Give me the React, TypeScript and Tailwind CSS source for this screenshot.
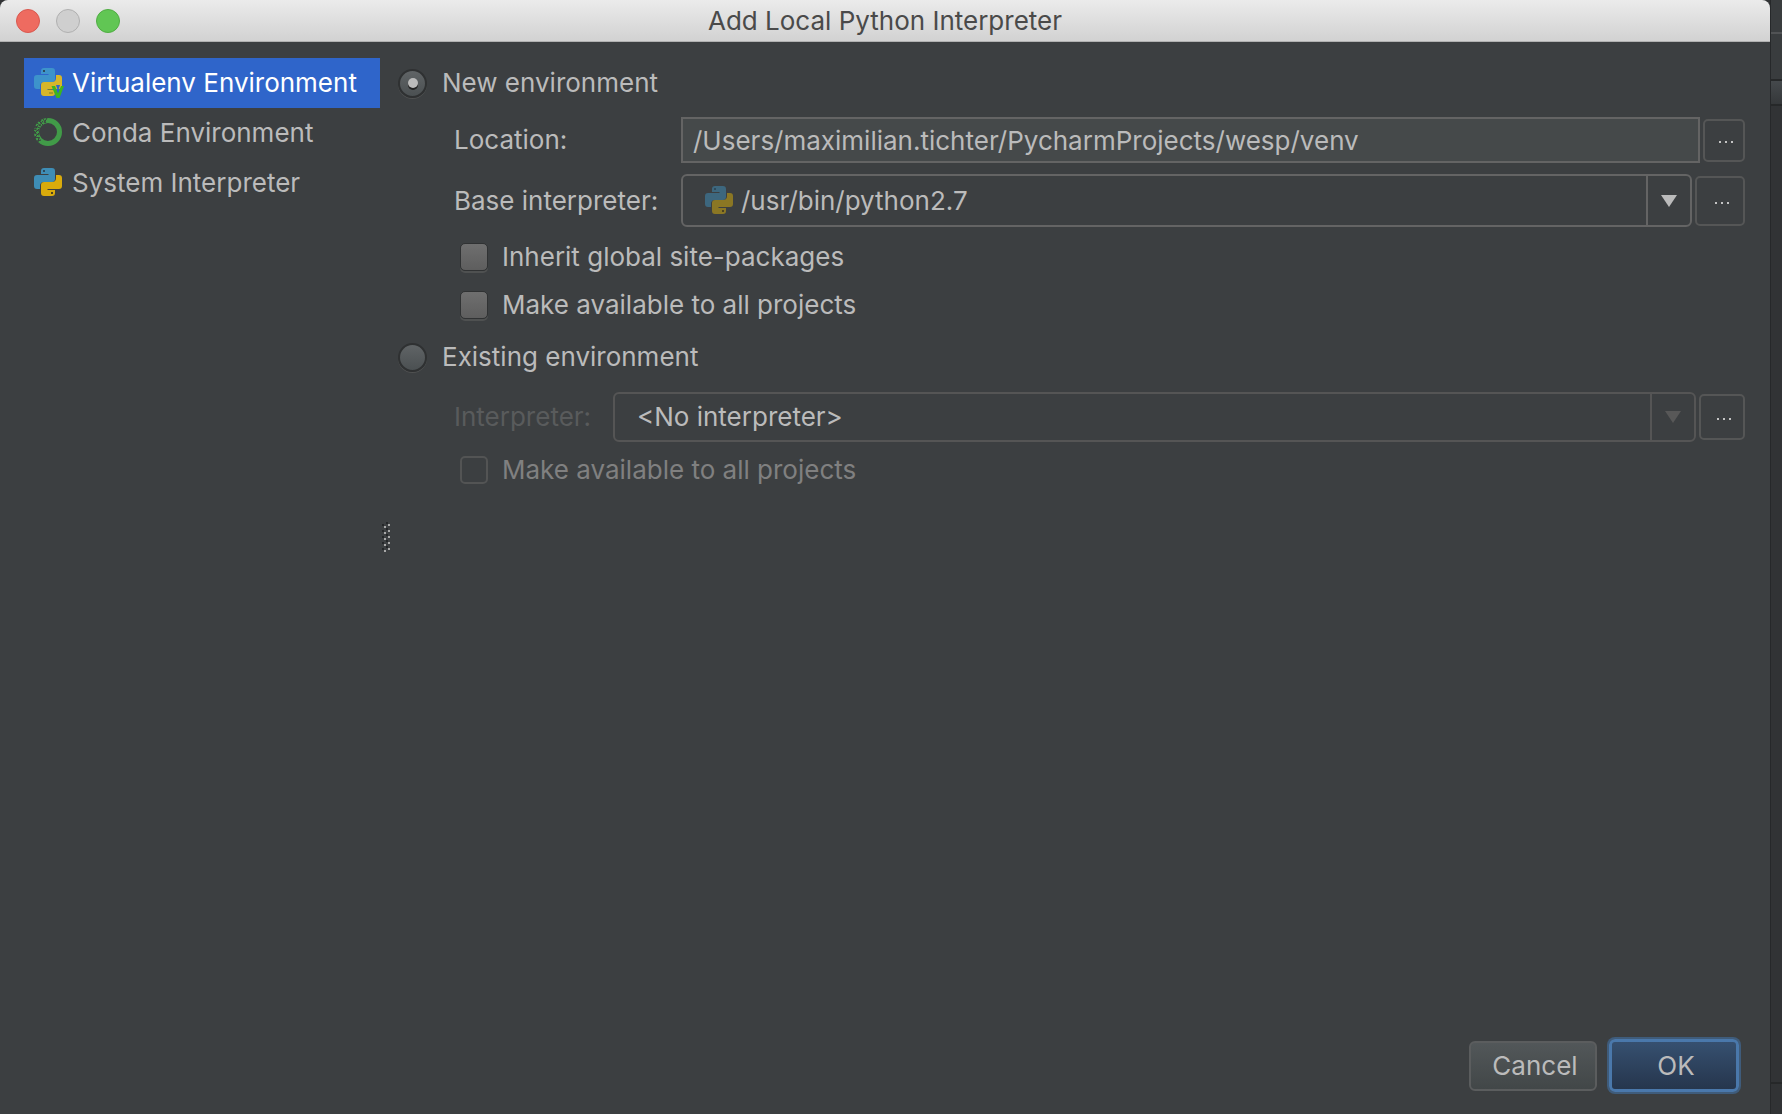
import { useId, useState } from "react";
import type { ReactNode } from "react";

const bluePath =
  "M10 0h8q3 0 3 3v8q0 3-3 3h-8q-4 0-4 4v3H3q-3 0-3-3v-8q0-3 3-3h11.5v-1H7V3q0-3 3-3Z";

function PythonIcon({ tone = "normal" }: { tone?: "normal" | "selected" | "dimmed" }) {
  const colors = {
    normal: ["#3e8db5", "#d9ab0c"],
    selected: ["#3d93cb", "#d6b62a"],
    dimmed: ["#3d677e", "#8b7724"],
  }[tone];
  return (
    <svg width="30" height="30" viewBox="0 0 30 30" aria-hidden="true" className="shrink-0">
      <path d={bluePath} fill={colors[0]} />
      <rect x="9" y="2" width="2" height="2" fill="#2d4a5c" />
      <g transform="rotate(180 14 14)">
        <path d={bluePath} fill={colors[1]} />
        {tone !== "selected" && <rect x="9" y="2" width="2" height="2" fill="#4c4220" />}
      </g>
      {tone === "selected" && (
        <>
          <path d="M22 17h4l-2 6Z" fill="#2f65ca" />
          <path d="M14 21.5h4M15 25h4" stroke="#77802c" />
          <path d="M17.500 18h3.500l3 7.500 3-7.500h3L25.500 30h-3Z" fill="#3bb51f" />
        </>
      )}
    </svg>
  );
}

function CondaIcon() {
  return (
    <svg width="30" height="30" viewBox="0 0 30 30" aria-hidden="true" className="shrink-0">
      <circle cx="14" cy="14" r="11.5" fill="none" stroke="#419b48" strokeWidth="5" />
      <g fill="none" stroke="#3c3f41" strokeWidth="1">
        <path d="M13 0l-3 5M9 1l3 4M5 3l4 4M9 3L5 8M3 5l4 3M4 7l-3 5M1 8l5 2M0 11l5 2M5 11l-4 4M0 15l5 2M5 15l-4 4M1 19l5 1M5 19l-1 5M3 23l4-1" />
      </g>
      <g fill="#3c3f41">
        <circle cx="6" cy="2.500" r="1.200" />
        <circle cx="1" cy="9" r="1.100" />
        <circle cx="0.500" cy="14" r="1" />
        <circle cx="1.500" cy="19.500" r="1.100" />
      </g>
    </svg>
  );
}

function MoreButton({ label, className }: { label: string; className: string }) {
  return (
    <button
      type="button"
      aria-label={label}
      className={`flex shrink-0 items-center justify-center rounded-[5px] border-2 border-[#555656] pl-1 ${className}`}
    >
      <svg width="14" height="2" viewBox="0 0 14 2" fill="#c4c4c4" aria-hidden="true" className="mt-1">
        <rect width="2" height="2" />
        <rect x="6" width="2" height="2" />
        <rect x="12" width="2" height="2" />
      </svg>
    </button>
  );
}

function ComboBox({
  id,
  value,
  icon,
  disabled = false,
  className,
}: {
  id: string;
  value: string;
  icon?: ReactNode;
  disabled?: boolean;
  className: string;
}) {
  return (
    <div
      className={`flex min-w-0 flex-1 items-stretch rounded-md border-2 pl-[22px] ${disabled ? "border-[#555555]" : "border-[#646464]"} ${className}`}
    >
      {icon && <span className="mr-[6px] flex items-center">{icon}</span>}
      <select
        id={id}
        disabled={disabled}
        className="min-w-0 flex-1 appearance-none bg-transparent text-[#bbbbbb] opacity-100 outline-none"
      >
        <option>{value}</option>
      </select>
      <span
        className={`flex w-11 items-center justify-center border-l-2 ${disabled ? "border-[#555555]" : "border-[#646464]"}`}
      >
        <svg width="16" height="12" viewBox="0 0 16 12" aria-hidden="true">
          <path d="M0 0h16L8 12Z" fill={disabled ? "#585858" : "#bbbbbb"} />
        </svg>
      </span>
    </div>
  );
}

function CheckBox({ label, disabled = false }: { label: string; disabled?: boolean }) {
  const id = useId();
  return (
    <div className="flex h-12 items-center gap-[14px] pl-[62px]">
      <input
        id={id}
        type="checkbox"
        disabled={disabled}
        className="size-7 shrink-0 appearance-none rounded-[5px] border border-[#303233] bg-linear-to-b from-[#6f6f6f] to-[#5e5e5e] shadow-[0_2px_0_#4f5151] checked:from-[#8a8a8a] checked:to-[#7a7a7a] disabled:border-2 disabled:border-[#535454] disabled:from-transparent disabled:to-transparent disabled:shadow-none"
      />
      <label htmlFor={id} className={disabled ? "text-[#808080]" : ""}>
        {label}
      </label>
    </div>
  );
}

function Radio({
  label,
  checked,
  onChange,
}: {
  label: string;
  checked: boolean;
  onChange: () => void;
}) {
  const id = useId();
  return (
    <div className="flex h-12 items-center gap-[15px]">
      <span className="grid size-[29px] shrink-0 place-items-center">
        <input
          id={id}
          type="radio"
          name="environment"
          checked={checked}
          onChange={onChange}
          className="col-start-1 row-start-1 size-[29px] appearance-none rounded-full border-2 border-[#2f3132] bg-linear-to-b from-[#606466] to-[#4b5052] shadow-[0_1px_0_#505252]"
        />
        {checked && (
          <span className="pointer-events-none col-start-1 row-start-1 size-[10px] rounded-full bg-[#bbbbbb] shadow-[0_2px_0_#222222]" />
        )}
      </span>
      <label htmlFor={id}>{label}</label>
    </div>
  );
}

const kinds = [
  { name: "Virtualenv Environment", icon: <PythonIcon tone="selected" />, selected: true },
  { name: "Conda Environment", icon: <CondaIcon />, selected: false },
  { name: "System Interpreter", icon: <PythonIcon />, selected: false },
];

function TitleBar() {
  return (
    <header className="grid h-[42px] grid-cols-[1fr_auto_1fr] items-center rounded-t-lg border-b border-[#b1b1b1] bg-linear-to-b from-[#ebebeb] to-[#d2d2d2] px-4">
      <div className="flex gap-4">
        <button type="button" aria-label="Close" className="size-6 rounded-full border border-[#d9584f] bg-[#ee6b60]" />
        <button type="button" aria-label="Minimize" className="size-6 rounded-full border border-[#b0b0b0] bg-[#cfcfcf]" />
        <button type="button" aria-label="Zoom" className="size-6 rounded-full border border-[#50ad43] bg-[#61c654]" />
      </div>
      <h1 className="text-[#4a4a4a]">Add Local Python Interpreter</h1>
    </header>
  );
}

function Splitter() {
  return (
    <svg width="8" height="30" viewBox="0 0 8 30" aria-hidden="true" className="shrink-0">
      {[0, 6, 12, 18, 24].map((y) => (
        <g key={y}>
          <rect x="0" y={y + 2} width="2" height="2" fill="#242628" />
          <rect x="4" y={y} width="2" height="2" fill="#242628" />
          <rect x="6" y={y + 2} width="2" height="2" fill="#a8a8a8" />
          <rect x="2" y={y + 4} width="2" height="2" fill="#a8a8a8" />
        </g>
      ))}
    </svg>
  );
}

export default function App() {
  const [mode, setMode] = useState<"new" | "existing">("new");
  return (
    <div className="flex min-h-screen bg-[#313335] font-['Inter',sans-serif] text-[26px] leading-8 text-[#bbbbbb]">
      <main className="flex min-w-0 flex-1 flex-col rounded-t-lg bg-[#3c3f41]">
        <TitleBar />
        <div className="flex flex-1">
          <ul className="ml-6 w-[356px] shrink-0 pt-4">
            {kinds.map((kind) => (
              <li key={kind.name}>
                <button
                  type="button"
                  className={`flex h-[50px] w-full items-center gap-2 pl-[10px] text-left whitespace-nowrap ${kind.selected ? "bg-[#2f65ca] text-white" : ""}`}
                >
                  {kind.icon}
                  {kind.name}
                </button>
              </li>
            ))}
          </ul>
          <div className="flex w-[18px] shrink-0 items-center pl-[2px]">
            <Splitter />
          </div>
          <form className="min-w-0 flex-1 pt-[17px] pr-[25px]">
            <Radio label="New environment" checked={mode === "new"} onChange={() => setMode("new")} />
            <div className="mt-[10px] flex items-center pl-14">
              <label htmlFor="location" className="w-[227px] shrink-0">
                Location:
              </label>
              <input
                id="location"
                type="text"
                defaultValue="/Users/maximilian.tichter/PycharmProjects/wesp/venv"
                className="h-[46px] min-w-0 flex-1 border-2 border-[#646464] bg-[#45494a] px-[10px] outline-none"
              />
              <MoreButton label="Browse location" className="ml-[3px] h-[43px] w-[42px]" />
            </div>
            <div className="mt-[11px] flex items-center pl-14">
              <label htmlFor="base" className="w-[227px] shrink-0">
                Base interpreter:
              </label>
              <ComboBox
                id="base"
                value="/usr/bin/python2.7"
                icon={<PythonIcon tone="dimmed" />}
                className="h-[53px]"
              />
              <MoreButton label="Browse base interpreter" className="ml-[3px] h-[50px] w-[50px]" />
            </div>
            <div className="mt-[6px]">
              <CheckBox label="Inherit global site-packages" />
              <CheckBox label="Make available to all projects" />
            </div>
            <div className="mt-1">
              <Radio
                label="Existing environment"
                checked={mode === "existing"}
                onChange={() => setMode("existing")}
              />
            </div>
            <div className="mt-[11px] flex items-center pl-14">
              <label htmlFor="existing" className="w-[159px] shrink-0 text-[#595b5c]">
                Interpreter:
              </label>
              <ComboBox id="existing" value="<No interpreter>" disabled className="h-[50px]" />
              <MoreButton label="Browse interpreter" className="ml-[3px] h-[46px] w-[46px]" />
            </div>
            <div className="mt-1">
              <CheckBox label="Make available to all projects" disabled />
            </div>
          </form>
        </div>
        <footer className="flex items-center justify-end gap-3 pt-2 pr-[31px] pb-[22px]">
          <button
            type="button"
            className="h-[50px] w-32 rounded-md border-2 border-[#5b5d5e] bg-linear-to-b from-[#525759] to-[#424748] pl-1"
          >
            Cancel
          </button>
          <button
            type="button"
            className="h-[53px] w-[130px] rounded-md border-3 border-[#4a78ab] bg-linear-to-b from-[#365070] to-[#26364d] pl-1 shadow-[0_0_0_2px_#3f5c7b]"
          >
            OK
          </button>
        </footer>
      </main>
      <aside className="flex w-3 flex-col border-l border-[#26282a] bg-[#313335]" aria-hidden="true">
        <div className="h-8 bg-[#393c3e]" />
        <div className="h-[47px] border-t-2 border-[#515355] bg-[#393c3e]" />
        <div className="h-[27px] border-y-2 border-[#262829] bg-linear-to-b from-[#45494c] to-[#35383a]" />
        <div className="flex-1" />
        <div className="h-8 border-t-2 border-[#262829]" />
      </aside>
    </div>
  );
}
